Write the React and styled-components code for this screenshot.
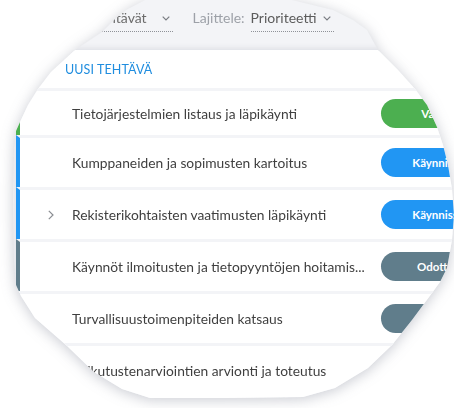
import React from "react";
import styled, { createGlobalStyle } from "styled-components";

const GlobalStyle = createGlobalStyle`
  html, body {
    margin: 0;
    padding: 0;
    background: #ffffff;
  }
  body {
    font-family: Lato, "Open Sans", "Liberation Sans", sans-serif;
    -webkit-font-smoothing: antialiased;
  }
`;

const LENS_SHAPE = `polygon(
  145px 0, 292px 0, 333px 10px, 353px 20px, 367px 30px, 378px 50px,
  398px 70px, 415px 89px, 427px 105px, 437px 127px, 443px 145px,
  448px 165px, 452px 189px, 454px 215px, 452px 240px, 447px 268px,
  440px 282px, 432px 293px, 412px 320px, 392px 345px, 368px 368px,
  335px 388px, 303px 397px, 226px 398px, 150px 398px, 122px 389px,
  94px 372px, 66px 345px, 35px 318px, 21px 296px, 16px 285px,
  14px 260px, 13px 200px, 14px 150px, 16px 131px, 20px 122px,
  28px 105px, 38px 89px, 51px 72px, 75px 50px, 102px 32px,
  114px 20px, 126px 10px
)`;

const Stage = styled.div`
  width: 454px;
  height: 408px;
  filter: drop-shadow(0 2px 7px rgba(60, 70, 95, 0.28));
`;

const Lens = styled.div`
  width: 454px;
  height: 408px;
  overflow: hidden;
  clip-path: ${LENS_SHAPE};
  background: #f3f4f7;
  display: flex;
  flex-direction: column;
`;

const Toolbar = styled.div`
  height: 50px;
  flex: none;
  box-sizing: border-box;
  padding: 9px 0 0 55px;
  display: flex;
  align-items: flex-start;
  font-size: 14px;
`;

const Label = styled.span`
  color: #9da1a8;
  line-height: 18px;
  margin: 0 6px 0 20px;
`;

const Dropdown = styled.div`
  display: flex;
  align-items: center;
  gap: ${(p) => p.$gap || 7}px;
  line-height: 18px;
  padding: 0 3px 4px 0;
  border-bottom: 1px dotted #8f9298;
  color: ${(p) => p.$color || "#5c5c5c"};
`;

const Card = styled.div`
  flex: 1;
  width: 504px;
  margin-left: 16px;
  background: #ffffff;
  box-shadow: 0 -1px 6px rgba(40, 50, 70, 0.12);
  display: flex;
  flex-direction: column;
`;

const NewTask = styled.div`
  height: 38px;
  flex: none;
  display: flex;
  align-items: center;
  gap: 13px;
  padding-left: 24px;
  color: #1f8ddf;
  font-size: 12.5px;
  letter-spacing: 0.1px;
  text-transform: uppercase;
`;

const Row = styled.div`
  height: ${(p) => (p.$short ? 44 : 49)}px;
  flex: none;
  display: flex;
  align-items: center;
  border-top: 3px solid #f3f4f7;
  border-left: 4px solid ${(p) => p.$accent};
  padding: 0 25px 0 28px;
`;

const Toggle = styled.div`
  width: 24px;
  flex: none;
  display: flex;
  align-items: center;
`;

const Title = styled.div`
  flex: 1;
  min-width: 0;
  margin-right: 12px;
  font-size: 13.8px;
  color: #3f3f3f;
  white-space: nowrap;
  overflow: hidden;
  text-overflow: ellipsis;
`;

const Status = styled.div`
  width: 114px;
  height: 29px;
  flex: none;
  border-radius: 15px;
  background: ${(p) => p.$color};
  color: #ffffff;
  font-size: 11.5px;
  font-weight: 700;
  display: flex;
  align-items: center;
  justify-content: center;
`;

const STATUS = {
  done: { text: "Valmis", color: "#4caf50" },
  active: { text: "Käynnissä", color: "#2196f3" },
  waiting: { text: "Odottaa", color: "#607d8b" },
};

const tasks = [
  { title: "Tietojärjestelmien listaus ja läpikäynti", status: "done", short: true },
  { title: "Kumppaneiden ja sopimusten kartoitus", status: "active" },
  { title: "Rekisterikohtaisten vaatimusten läpikäynti", status: "active", subtasks: true },
  { title: "Käynnöt ilmoitusten ja tietopyyntöjen hoitamis...", status: "waiting" },
  { title: "Turvallisuustoimenpiteiden katsaus", status: "waiting" },
  { title: "Vaikutustenarviointien arvionti ja toteutus", status: "waiting" },
];

const ChevronDown = () => (
  <svg width="8" height="5" viewBox="0 0 8 5" fill="none">
    <path d="M0.7 0.7 L4 4 L7.3 0.7" stroke="#7a7d83" strokeWidth="1.2" />
  </svg>
);

const ChevronRight = () => (
  <svg width="6" height="10" viewBox="0 0 6 10" fill="none">
    <path d="M0.8 0.8 L5 5 L0.8 9.2" stroke="#8a8d92" strokeWidth="1.2" />
  </svg>
);

const Plus = () => (
  <svg width="12" height="12" viewBox="0 0 12 12" fill="none">
    <path d="M6 0 V12 M0 6 H12" stroke="#1f8ddf" strokeWidth="1.3" />
  </svg>
);

export default function App() {
  return (
    <>
      <GlobalStyle />
      <Stage>
        <Lens>
          <Toolbar>
            <Dropdown $color="#6b6b6b" $gap={15}>
              Kaikki tehtävät
              <ChevronDown />
            </Dropdown>
            <Label>Lajittele:</Label>
            <Dropdown>
              Prioriteetti
              <ChevronDown />
            </Dropdown>
          </Toolbar>
          <Card>
            <NewTask>
              <Plus />
              Uusi tehtävä
            </NewTask>
            {tasks.map((t) => (
              <Row key={t.title} $accent={STATUS[t.status].color} $short={t.short}>
                <Toggle>{t.subtasks && <ChevronRight />}</Toggle>
                <Title>{t.title}</Title>
                <Status $color={STATUS[t.status].color}>{STATUS[t.status].text}</Status>
              </Row>
            ))}
          </Card>
        </Lens>
      </Stage>
    </>
  );
}
